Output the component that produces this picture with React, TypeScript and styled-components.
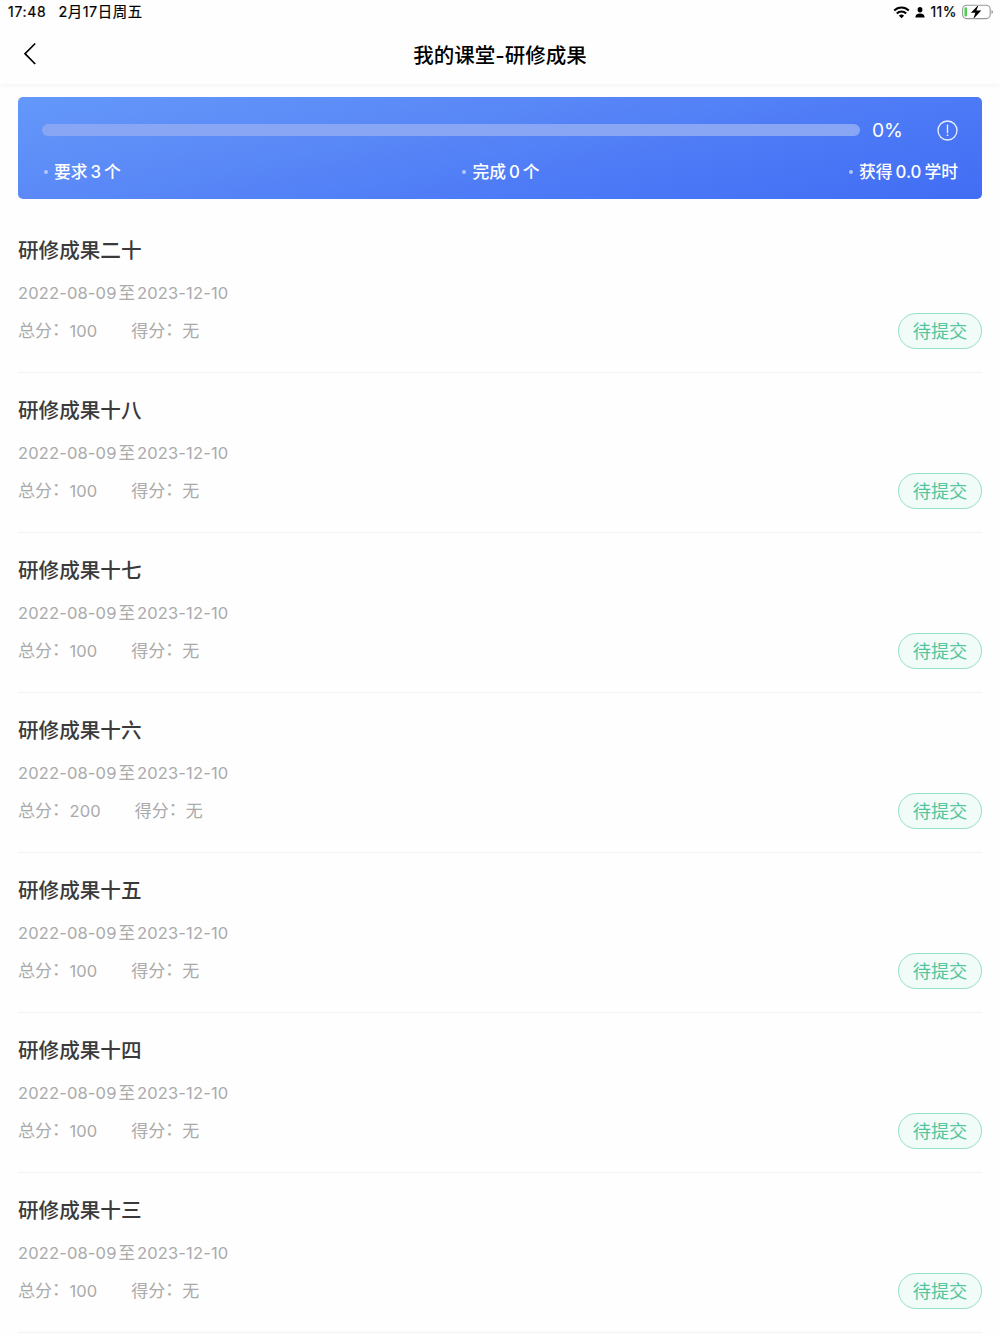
import React from "react";
import styled, { createGlobalStyle } from "styled-components";

const GlobalStyle = createGlobalStyle`
  * { box-sizing: border-box; }
  body {
    margin: 0;
    background: #fefefe;
    font-family: Inter, "Noto Sans CJK SC", sans-serif;
    color: #000;
    overflow: hidden;
  }
`;

const Screen = styled.div`
  width: 1000px;
  height: 1334px;
  overflow: hidden;
  display: flex;
  flex-direction: column;
`;

const StatusBar = styled.div`
  height: 24px;
  flex: none;
  display: flex;
  justify-content: space-between;
  padding: 0 6px 0 8px;
  font-size: 14px;
  font-weight: 400;
  -webkit-text-stroke: 0.2px #000;
  line-height: 24px;
`;

const StatusGroup = styled.div<{ $gap: number }>`
  display: flex;
  align-items: center;
  gap: ${(p) => p.$gap}px;
  white-space: nowrap;
`;

const Clock = styled.span`
  letter-spacing: 0.7px;
`;

const DateText = styled.span`
  font-size: 14.4px;
  letter-spacing: 0.55px;
`;

const Percent = styled.span`
  letter-spacing: 0.4px;
  width: 26px;
`;

const Header = styled.header`
  height: 60px;
  flex: none;
  display: grid;
  grid-template-columns: 60px 1fr 60px;
  align-items: center;
  box-shadow: 0 3px 4px -1px rgba(0, 0, 0, 0.04);
`;

const BackButton = styled.button`
  border: 0;
  padding: 0 0 0 23px;
  background: none;
  display: flex;
`;

const PageTitle = styled.h1`
  margin: 0;
  padding-top: 3px;
  text-align: center;
  font-size: 20.5px;
  line-height: 30px;
  font-weight: 500;
`;

const Summary = styled.section`
  flex: none;
  height: 102px;
  margin: 13px 18px 0;
  padding: 22px 24px 0;
  border-radius: 5px;
  color: #fff;
  background: linear-gradient(168deg, #6498fa 0%, #5b8af7 32%, #4d7af6 66%, #416df4 100%);
`;

const ProgressRow = styled.div`
  display: flex;
  align-items: center;
  height: 22px;
`;

const Track = styled.div`
  width: 818px;
  height: 12px;
  margin-top: -1px;
  border-radius: 6px;
  background: #89a6f4;
`;

const ProgressValue = styled.span`
  margin-left: 12px;
  width: 65px;
  font-size: 19.2px;
  line-height: 22px;
`;

const Stats = styled.div`
  display: grid;
  grid-template-columns: 1fr auto 1fr;
  margin-top: 18px;
  padding-left: 2px;

  > :last-child {
    justify-self: end;
  }
`;

const Stat = styled.div`
  display: flex;
  align-items: center;
  gap: 3px;
  font-size: 16.8px;
  line-height: 26px;
  font-weight: 500;
`;

const Dot = styled.i`
  width: 4px;
  height: 4px;
  margin: 0 3px 0 0;
  border-radius: 2px;
  background: #b0c6fc;
`;

const List = styled.main`
  flex: none;
  padding: 14px 18px 0;
`;

const Item = styled.article`
  height: 160.05px;
  border-bottom: 1px solid #f2f2f2;
`;

const ItemTitle = styled.h2`
  margin: 0;
  padding-top: 23px;
  font-size: 20.6px;
  line-height: 30px;
  font-weight: 500;
  color: #3a3a3a;
`;

const Period = styled.div`
  display: flex;
  gap: 2px;
  margin-top: 15px;
  font-size: 16.5px;
  line-height: 24px;
  color: #aaa;
`;

const DateValue = styled.span`
  letter-spacing: 0.15px;
`;

const ItemFooter = styled.div`
  display: flex;
  align-items: center;
  justify-content: space-between;
  height: 36px;
  margin-top: 8px;
`;

const Scores = styled.div`
  display: flex;
  gap: 34px;
  font-size: 17px;
  line-height: 24px;
  color: #aaa;
`;

const Score = styled.span`
  display: flex;
`;

const ScoreLabel = styled.span`
  display: flex;
  width: 51px;
`;

const Colon = styled.span`
  margin-top: -2px;
`;

const ScoreValue = styled.span`
  font-size: 16.5px;
  letter-spacing: 0.1px;
  padding-left: 0.5px;
`;

const SubmitButton = styled.button`
  width: 84px;
  height: 36px;
  padding: 0;
  border: 1px solid #94dfc5;
  border-radius: 18px;
  background: #f1fbf8;
  color: #54c69e;
  font: 400 18.2px/34px Inter, "Noto Sans CJK SC", sans-serif;
`;

const WifiIcon = () => (
  <svg width="17" height="13" viewBox="0 0 17 13" fill="none" stroke="#000">
    <path d="M1.2 4.6a10.3 10.3 0 0 1 14.6 0" strokeWidth="2.1" />
    <path d="M3.8 7.5a6.6 6.6 0 0 1 9.4 0" strokeWidth="2" />
    <path d="M8.5 12.3 5.9 9.7a3.7 3.7 0 0 1 5.2 0z" fill="#000" stroke="none" />
  </svg>
);

const PersonIcon = () => (
  <svg width="10" height="11" viewBox="0 0 10 11">
    <ellipse cx="5" cy="2.8" rx="2.4" ry="2.7" />
    <path d="M.4 10.6C.3 8 2.1 6.6 5 6.6s4.7 1.4 4.6 4z" />
  </svg>
);

const BatteryIcon = () => (
  <svg width="32" height="16" viewBox="0 0 32 16">
    <rect x="0.6" y="1.2" width="27.6" height="13.4" rx="4" fill="none" stroke="#999" strokeWidth="1.1" />
    <path d="M29.5 5.7c2 .8 2 3.6 0 4.4z" fill="#999" />
    <rect x="2.4" y="3.3" width="2.6" height="9.2" rx="1.1" fill="#54ce59" />
    <path d="M16.6.8 8.9 8.8h4.5l-2.3 6.4 8.2-8.6h-4.9z" stroke="#fff" strokeWidth="1" paintOrder="stroke" />
  </svg>
);

const BackIcon = () => (
  <svg width="14" height="24" viewBox="0 0 14 24" fill="none" stroke="#000" strokeWidth="1.7">
    <path d="M12.2 1.5 2 11.7 12.2 22" />
  </svg>
);

const InfoIcon = () => (
  <svg width="21" height="21" viewBox="0 0 21 21" fill="none" stroke="#eaf0ff">
    <circle cx="10.5" cy="10.5" r="9.5" strokeWidth="1.3" />
    <path d="M10.5 4.6v8.6" strokeWidth="1.4" />
    <path d="M10.5 14.4v1.6" strokeWidth="1.5" />
  </svg>
);

const stats = [
  { label: "要求", value: "3", unit: "个" },
  { label: "完成", value: "0", unit: "个" },
  { label: "获得", value: "0.0", unit: "学时" },
];

const items = [
  { name: "研修成果二十", total: 100 },
  { name: "研修成果十八", total: 100 },
  { name: "研修成果十七", total: 100 },
  { name: "研修成果十六", total: 200 },
  { name: "研修成果十五", total: 100 },
  { name: "研修成果十四", total: 100 },
  { name: "研修成果十三", total: 100 },
];

export default function App() {
  return (
    <Screen>
      <GlobalStyle />
      <StatusBar>
        <StatusGroup $gap={12}>
          <Clock>17:48</Clock>
          <DateText>2月17日周五</DateText>
        </StatusGroup>
        <StatusGroup $gap={5.5}>
          <WifiIcon />
          <PersonIcon />
          <Percent>11%</Percent>
          <BatteryIcon />
        </StatusGroup>
      </StatusBar>
      <Header>
        <BackButton aria-label="返回">
          <BackIcon />
        </BackButton>
        <PageTitle>我的课堂-研修成果</PageTitle>
      </Header>
      <Summary>
        <ProgressRow>
          <Track />
          <ProgressValue>0%</ProgressValue>
          <InfoIcon />
        </ProgressRow>
        <Stats>
          {stats.map((s) => (
            <Stat key={s.label}>
              <Dot />
              <span>{s.label}</span>
              <span>{s.value}</span>
              <span>{s.unit}</span>
            </Stat>
          ))}
        </Stats>
      </Summary>
      <List>
        {items.map((item) => (
          <Item key={item.name}>
            <ItemTitle>{item.name}</ItemTitle>
            <Period>
              <DateValue>2022-08-09</DateValue>
              <span>至</span>
              <DateValue>2023-12-10</DateValue>
            </Period>
            <ItemFooter>
              <Scores>
                <Score>
                  <ScoreLabel>
                    总分<Colon>：</Colon>
                  </ScoreLabel>
                  <ScoreValue>{item.total}</ScoreValue>
                </Score>
                <Score>
                  <ScoreLabel>
                    得分<Colon>：</Colon>
                  </ScoreLabel>
                  无
                </Score>
              </Scores>
              <SubmitButton>待提交</SubmitButton>
            </ItemFooter>
          </Item>
        ))}
      </List>
    </Screen>
  );
}
